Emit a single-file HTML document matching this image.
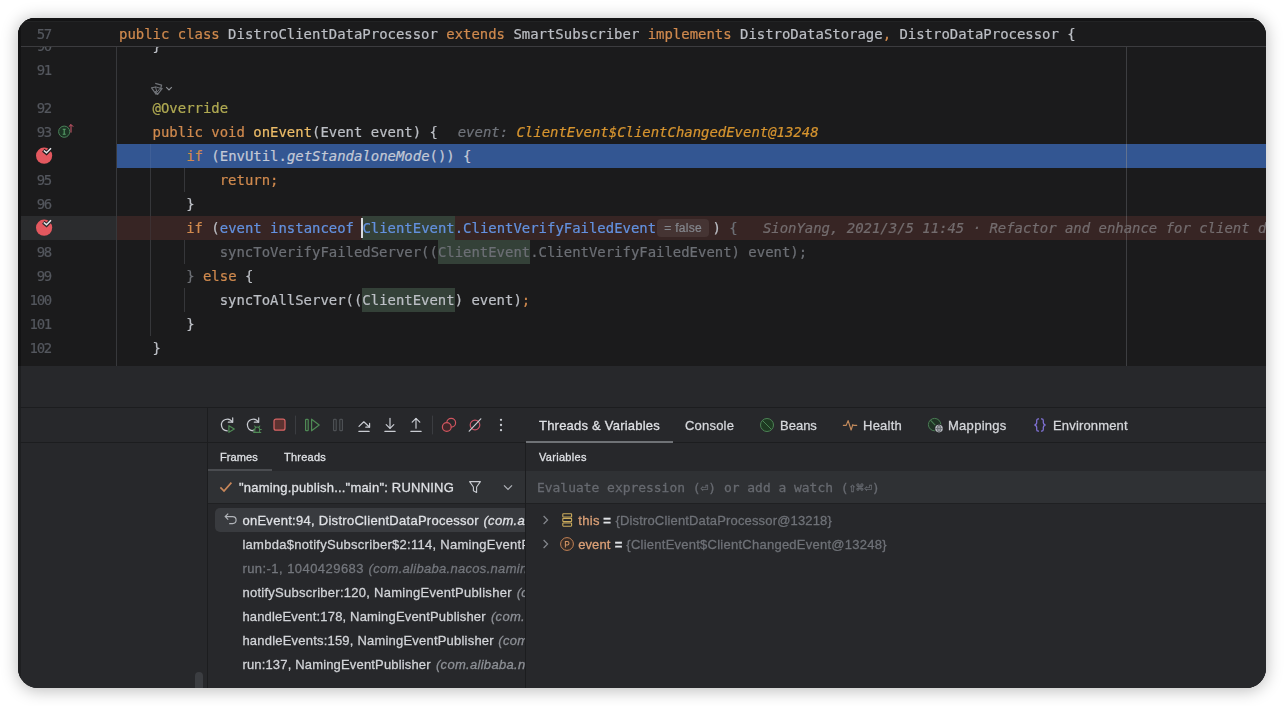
<!DOCTYPE html>
<html lang="en">
<head>
<meta charset="utf-8">
<title>Debugger</title>
<style>
html,body{margin:0;padding:0;}
body{width:1284px;height:706px;background:#fff;overflow:hidden;position:relative;
  font-family:"Liberation Sans","DejaVu Sans",sans-serif;}
#win{position:absolute;left:18px;top:18px;width:1248px;height:670px;border-radius:17px 17px 20px 20px;
  background:#1b1b1c;overflow:hidden;opacity:.999;}
#shadow{position:absolute;left:18px;top:18px;width:1248px;height:670px;border-radius:17px 17px 20px 20px;
  box-shadow:0 1.5px 16px 1px rgba(0,0,0,.25);}
.abs{position:absolute;}
/* ---------- editor ---------- */
#editor{position:absolute;left:0;top:0;width:1248px;height:348px;background:#1b1b1c;
  font-family:"DejaVu Sans Mono","Liberation Mono",monospace;font-size:13.95px;color:#bcbfc5;-webkit-text-stroke:.22px;}
.row{position:absolute;left:0;width:1248px;height:24px;line-height:25px;white-space:pre;}
.ln{position:absolute;left:0;width:32.9px;text-align:right;color:#54575e;font-size:13.95px;letter-spacing:-1.3px;}
.code{position:absolute;left:101px;top:0;white-space:pre;}
.k{color:#d08a4e;}
.an{color:#b0aa52;}
.fn{color:#ecbc68;}
.it{font-style:italic;}
.dim{color:#6c6f75;}
.bl{color:#6391df;}
.hl{background:#344138;display:inline-block;height:24px;vertical-align:top;}
.hint{color:#6f737a;font-style:italic;}
.val{color:#d6942f;font-style:italic;}
.inl{display:inline-block;vertical-align:top;box-sizing:border-box;height:18px;margin-top:3px;line-height:19.500px;width:52px;text-align:center;font-family:"Liberation Sans",sans-serif;font-size:12px;color:#84878d;background:rgba(255,255,255,.07);border-radius:4px;margin-left:1px;margin-right:-5px;letter-spacing:.25px;}
/* ---------- panel ---------- */
#panel{position:absolute;left:0;top:348px;width:1248px;height:322px;background:#27282b;
  font-size:13px;color:#d5d7db;-webkit-text-stroke:.28px;}
.hline{position:absolute;left:0;width:1248px;height:1px;background:#1c1d1f;}
.vline{position:absolute;width:1px;background:#1c1d1f;}
.t{position:absolute;white-space:nowrap;line-height:16px;margin-top:1px;}
.fr{position:absolute;left:224.4px;white-space:nowrap;line-height:26px;height:24px;color:#d2d4d8;}
.fr i{color:#8d9096;}
</style>
</head>
<body>
<div id="shadow"></div>
<div id="win">
<div id="editor">
<!-- right margin guide -->
<div class="abs" style="left:1108px;top:28px;width:1px;height:320px;background:#3d3e41;"></div>
<!-- gutter separator -->
<div class="abs" style="left:98px;top:28px;width:1px;height:320px;background:#37383b;"></div>
<!-- indent guides -->
<div class="abs" style="left:132px;top:126px;width:1px;height:192px;background:#36373a;"></div>
<div class="abs" style="left:166px;top:150px;width:1px;height:24px;background:#36373a;"></div>
<div class="abs" style="left:166px;top:222px;width:1px;height:24px;background:#36373a;"></div>
<div class="abs" style="left:166px;top:270px;width:1px;height:24px;background:#36373a;"></div>

<!-- partially hidden line 90 -->
<div class="row" style="top:16px;"><span class="ln">90</span><span class="code">    }</span></div>
<div class="row" style="top:40px;"><span class="ln">91</span></div>
<!-- inlay row -->
<svg class="abs" style="left:132px;top:63px;" width="26" height="16" viewBox="0 0 26 16">
  <g fill="none" stroke="#707378" stroke-width="1.250" stroke-linejoin="round">
    <path d="M5.200 2.400l6.400 1.800-1.200 4.200M12.400 7.200l-4.800 6.200-2.400-3.200M6.400 13.600L1.600 6.800l4-.8"/>
    <path d="M5.400 5.800l4.800 1.400-3.200 4z" stroke-width="1"/>
  </g>
  <path d="M16.200 6.200l2.800 2.800 2.800-2.800" fill="none" stroke="#8a8d92" stroke-width="1.200"/>
</svg>
<div class="row" style="top:78px;"><span class="ln">92</span><span class="code">    <span class="an">@Override</span></span></div>
<div class="row" style="top:102px;"><span class="ln">93</span><span class="code">    <span class="k">public void</span> <span class="fn">onEvent</span>(Event event) {  <span class="hint" style="margin-left:3px">event: </span><span class="val">ClientEvent$ClientChangedEvent@13248</span></span></div>
<!-- gutter icon line 93 -->
<svg class="abs" style="left:38px;top:104px;" width="20" height="18" viewBox="0 0 20 18">
  <circle cx="8.200" cy="9.700" r="5.600" fill="#1c3324" stroke="#4a8259" stroke-width="1"/>
  <path d="M6.700 7.200h3M6.700 12.200h3M8.200 7.200v5" stroke="#57a068" stroke-width="1.100" fill="none"/>
  <path d="M15 10.600V2.600M12.800 4.700L15 2.500l2.200 2.200" stroke="#d25a6c" stroke-width="1" fill="none"/>
</svg>
<!-- line 94 execution point -->
<div class="row" style="top:126px;"><div class="abs" style="left:99px;top:0;width:1149px;height:24px;background:#335692;"></div>
<div class="abs" style="left:132px;top:0;width:1px;height:24px;background:#3f5f97;"></div>
<div class="abs" style="left:1108px;top:0;width:1px;height:24px;background:#62728f;"></div>
<span class="code">        <span class="k">if</span> <span style="color:#c3c9d6">(EnvUtil.<span class="it">getStandaloneMode</span>()) {</span></span></div>
<div class="row" style="top:150px;"><span class="ln">95</span><span class="code">            <span class="k">return;</span></span></div>
<div class="row" style="top:174px;"><span class="ln">96</span><span class="code">        }</span></div>
<!-- line 97 breakpoint + caret row -->
<div class="row" style="top:198px;"><div class="abs" style="left:3px;top:0;width:95px;height:24px;background:#2b2c2e;"></div>
<div class="abs" style="left:99px;top:0;width:1149px;height:24px;background:#372524;"></div>
<div class="abs" style="left:132px;top:0;width:1px;height:24px;background:#3c3032;"></div>
<div class="abs" style="left:1108px;top:0;width:1px;height:24px;background:#564c4d;"></div>
<span class="code">        <span class="k">if</span> (<span class="bl">event instanceof <span class="hl">ClientEvent</span>.ClientVerifyFailedEvent</span><span class="inl">= false</span> ) <span class="dim">{</span>  <span class="hint" style="color:#736c6e"> SionYang, 2021/3/5 11:45 · Refactor and enhance for client data</span></span>
<div class="abs" style="left:343px;top:2px;width:2px;height:20px;background:#d8dadf;"></div></div>
<div class="row" style="top:222px;"><span class="ln">98</span><span class="code dim">            syncToVerifyFailedServer((<span class="hl">ClientEvent</span>.ClientVerifyFailedEvent) event);</span></div>
<div class="row" style="top:246px;"><span class="ln">99</span><span class="code">        <span class="dim">}</span> <span class="k">else</span> {</span></div>
<div class="row" style="top:270px;"><span class="ln">100</span><span class="code">            syncToAllServer((<span class="hl">ClientEvent</span>) event)<span class="k">;</span></span></div>
<div class="row" style="top:294px;"><span class="ln">101</span><span class="code">        }</span></div>
<div class="row" style="top:318px;"><span class="ln">102</span><span class="code">    }</span></div>

<!-- breakpoints -->
<svg class="abs" style="left:16px;top:128px;" width="20" height="20" viewBox="0 0 20 20">
  <circle cx="10.100" cy="9.700" r="8.100" fill="#e3585f"/>
  <path d="M9.300 4.300l3.200 2.700 4.900-5" stroke="#1b1b1c" stroke-width="3.800" fill="none"/>
  <path d="M9.800 4.500l2.700 2.300 4.500-4.500" stroke="#e8e9ec" stroke-width="1.500" fill="none"/>
</svg>
<svg class="abs" style="left:16px;top:200px;" width="20" height="20" viewBox="0 0 20 20">
  <circle cx="10.100" cy="9.700" r="8.100" fill="#e3585f"/>
  <path d="M9.300 4.300l3.200 2.700 4.900-5" stroke="#2b2c2e" stroke-width="3.800" fill="none"/>
  <path d="M9.800 4.500l2.700 2.300 4.500-4.500" stroke="#e8e9ec" stroke-width="1.500" fill="none"/>
</svg>

<!-- sticky header -->
<div class="abs" style="left:0;top:0;width:1248px;height:28px;background:#1b1b1c;"></div>
<div class="abs" style="left:0;top:28px;width:1248px;height:1px;background:#3c3c3f;"></div>
<div class="abs" style="left:0;top:0;width:1248px;height:3px;background:#141415;"></div>
<div class="abs" style="left:0;top:3px;width:1248px;height:1px;background:#222324;"></div>
<div class="abs" style="left:0;top:0;width:2.5px;height:348px;background:#131314;"></div>
<div class="row" style="top:4px;"><span class="ln">57</span><span class="code"><span class="k">public class</span> DistroClientDataProcessor <span class="k">extends</span> SmartSubscriber <span class="k">implements</span> DistroDataStorage<span class="k">,</span> DistroDataProcessor {</span></div>
</div>
<div id="panel">
<div class="abs" style="left:0;top:0;width:2.5px;height:322px;background:#1e1f21;"></div>
<div class="hline" style="top:41px;"></div>
<div class="hline" style="top:76px;"></div>
<div class="vline" style="left:188.500px;top:41px;height:281px;"></div>
<div class="vline" style="left:507px;top:77px;height:245px;"></div>

<!-- toolbar icons -->
<svg class="abs" style="left:196px;top:47.4px;" width="300" height="24" viewBox="0 0 300 24" fill="none" stroke-width="1.2" stroke-linecap="round" stroke-linejoin="round">
  <!-- rerun: centre 14 -->
  <g stroke="#c9ccd2"><path d="M18.400 9.300A5.800 5.800 0 1 0 13.300 17.800"/><path d="M18.700 4.800v4.400h-4.400"/></g>
  <path d="M14.900 12.700v6.600l5.400-3.300z" stroke="#4f8a55"/>
  <!-- rerun debug: centre 40 -->
  <g stroke="#c9ccd2"><path d="M44.400 9.300A5.800 5.800 0 1 0 39.300 17.800"/><path d="M44.700 4.800v4.400h-4.400"/></g>
  <g stroke="#4f8a55" stroke-width="1.050"><path d="M40.800 19.300v-2.600a2.400 2.800 0 0 1 4.800 0v2.600z"/><path d="M41.600 14.200l-1-1.200M44.800 14.200l1-1.200M40.600 16.400h-1.500M45.800 16.400h1.500M39.600 19.400h7.200"/></g>
  <!-- stop: centre 66 -->
  <rect x="60" y="6.200" width="11" height="11" rx="2" fill="#5c3230" stroke="#d96464"/>
  <!-- sep -->
  <path d="M81.5 3v18" stroke="#3b3d41" stroke-width="1"/>
  <!-- resume: centre 98 -->
  <g stroke="#4f8a55"><rect x="91.6" y="6.4" width="2.6" height="11.2" rx=".6"/><path d="M97.6 6.2v11.6l7.6-5.8z"/></g>
  <!-- pause: centre 124 -->
  <g stroke="#4d5054"><rect x="119.6" y="6.4" width="2.6" height="11.2" rx=".6"/><rect x="125.8" y="6.4" width="2.6" height="11.2" rx=".6"/></g>
  <!-- step over: centre 150 -->
  <g stroke="#c9ccd2"><path d="M144.900 18.400h10.200"/><path d="M145 13.400l4.800-4.600 5.600 5.200"/><path d="M151.800 14.200h3.800v-3.800"/></g>
  <!-- step into: centre 176 -->
  <g stroke="#c9ccd2"><path d="M170.900 18.400h10.200"/><path d="M176 5.4v9.8"/><path d="M172.2 11.6l3.8 3.8 3.8-3.8"/></g>
  <!-- step out: centre 202 -->
  <g stroke="#c9ccd2"><path d="M196.900 18.400h10.200"/><path d="M202 15.2V5.6"/><path d="M198.2 9.2l3.800-3.8 3.800 3.800"/></g>
  <!-- sep -->
  <path d="M218.5 3v18" stroke="#3b3d41" stroke-width="1"/>
  <!-- view breakpoints: centre 235 -->
  <g stroke="#d0555f"><circle cx="237.200" cy="9.800" r="4.400"/><circle cx="232.800" cy="14" r="4.400" fill="#3f2629"/></g>
  <!-- mute: centre 261 -->
  <circle cx="261" cy="12" r="4.800" stroke="#cc5264"/><path d="M255.200 18.200L266.800 5.800" stroke="#c9ccd2"/>
  <!-- more -->
  <g fill="#c9ccd2" stroke="none"><circle cx="287" cy="6.800" r="1.150"/><circle cx="287" cy="12" r="1.150"/><circle cx="287" cy="17.200" r="1.150"/></g>
</svg>

<!-- main tabs -->
<div class="t" style="left:521px;top:51px;letter-spacing:.22px;color:#dfe1e5;">Threads &amp; Variables</div>
<div class="abs" style="left:508px;top:75px;width:147px;height:2px;background:#6f7276;"></div>
<div class="t" style="left:667px;top:51px;letter-spacing:.2px;">Console</div>
<svg class="abs" style="left:741px;top:51px;" width="16" height="16" viewBox="0 0 16 16" fill="none"><circle cx="8" cy="8" r="6.500" fill="#1e3a22" stroke="#4c8355" stroke-width="1"/><path d="M3.400 3.400l9.200 9.200" stroke="#4c8355" stroke-width="1"/></svg>
<div class="t" style="left:762px;top:51px;">Beans</div>
<svg class="abs" style="left:824px;top:51px;" width="16" height="16" viewBox="0 0 16 16" fill="none"><path d="M1.400 8.400h2.800l1.900-4.800 3 9.400 1.700-5.400.9.800h3" stroke="#c28a5c" stroke-width="1.200" stroke-linejoin="round" stroke-linecap="round"/></svg>
<div class="t" style="left:845px;top:51px;letter-spacing:.25px;">Health</div>
<svg class="abs" style="left:909px;top:51px;" width="17" height="17" viewBox="0 0 17 17" fill="none"><circle cx="7.600" cy="7.600" r="6.200" fill="#1f3324" stroke="#4a7d54" stroke-width="1"/><path d="M3.400 3.200l5 5.200" stroke="#4a7d54" stroke-width="1.100"/><circle cx="12" cy="11.600" r="4.600" fill="#27282b"/><circle cx="12" cy="11.600" r="3.800" fill="#b9bcc1"/><path d="M8.400 11.600h7.200M12 8v7.200" stroke="#55585d" stroke-width=".7"/><ellipse cx="12" cy="11.600" rx="1.700" ry="3.600" stroke="#55585d" stroke-width=".7"/></svg>
<div class="t" style="left:930px;top:51px;letter-spacing:.28px;">Mappings</div>
<svg class="abs" style="left:1014px;top:51px;" width="16" height="16" viewBox="0 0 16 16" fill="none"><path d="M7 1.800H6.400c-1 0-1.700.7-1.700 1.700v2.300c0 1-.6 1.700-1.700 1.900v.6c1.100.2 1.700.9 1.700 1.900v2.300c0 1 .7 1.700 1.700 1.700H7M9 1.800h.6c1 0 1.700.7 1.700 1.700v2.300c0 1 .6 1.700 1.700 1.900v.6c-1.100.2-1.700.9-1.700 1.900v2.300c0 1-.7 1.700-1.700 1.700H9" stroke="#8072d6" stroke-width="1.250" stroke-linejoin="round"/></svg>
<div class="t" style="left:1035px;top:51px;letter-spacing:.16px;">Environment</div>

<!-- sub tabs -->
<div class="t" style="left:202px;top:83px;font-size:11px;margin-top:0;letter-spacing:.08px;color:#dfe1e5;">Frames</div>
<div class="abs" style="left:189.500px;top:103px;width:64.500px;height:2px;background:#4a4c50;"></div>
<div class="t" style="left:266px;top:83px;font-size:11px;margin-top:0;letter-spacing:.24px;color:#dfe1e5;">Threads</div>
<div class="t" style="left:521px;top:83px;font-size:11px;margin-top:0;letter-spacing:.3px;color:#dfe1e5;">Variables</div>

<!-- thread selector row -->
<div class="abs" style="left:189.500px;top:105px;width:317.500px;height:32px;background:#2f3134;"></div>
<div class="abs" style="left:189.500px;top:137px;width:317.500px;height:1px;background:#1f2022;"></div>
<svg class="abs" style="left:200px;top:113px;" width="16" height="16" viewBox="0 0 16 16" fill="none"><path d="M2.400 8.400l3.600 3.600 7.400-8.400" stroke="#c8875a" stroke-width="1.650"/></svg>
<div class="t" style="left:221px;top:113px;letter-spacing:.205px;color:#dfe1e5;">"naming.publish..."main": RUNNING</div>
<svg class="abs" style="left:449px;top:113px;" width="16" height="16" viewBox="0 0 16 16" fill="none"><path d="M2.600 2.600h10.800L9.600 8v5.400l-3.200-1.600V8z" stroke="#c9ccd2" stroke-width="1.100" stroke-linejoin="round"/></svg>
<svg class="abs" style="left:482px;top:113px;" width="16" height="16" viewBox="0 0 16 16" fill="none"><path d="M4 6.400l4 4 4-4" stroke="#b0b3b9" stroke-width="1.200"/></svg>

<!-- evaluate row -->
<div class="abs" style="left:508px;top:105px;width:740px;height:32px;background:#2f3134;"></div>
<div class="abs" style="left:508px;top:137px;width:740px;height:1px;background:#1f2022;"></div>
<div class="t" style="left:519px;top:113px;font-family:'DejaVu Sans Mono','Liberation Mono',monospace;font-size:12.950px;margin-top:.8px;color:#676a70;">Evaluate expression (⏎) or add a watch (⇧⌘⏎)</div>

<!-- frames list -->
<div class="abs" style="left:197px;top:142px;width:330px;height:24px;border-radius:5px;background:#393b3f;"></div>
<svg class="abs" style="left:205.300px;top:145.200px;" width="16" height="16" viewBox="0 0 16 16" fill="none"><path d="M5.200 2.600L2.200 5.600l3 3M2.400 5.600h7.200a3.500 3.500 0 0 1 0 7H6.200" stroke="#b2b5ba" stroke-width="1.150"/></svg>
<div class="fr" style="top:142px;color:#dfe1e5;"><span style="letter-spacing:0.281px">onEvent:94, DistroClientDataProcessor</span><i style="margin-left:4.5px;letter-spacing:.3px;color:#dfe1e5">(com.alibaba.nacos.naming</i></div>
<div class="fr" style="top:166px;color:#d2d4d8;"><span style="letter-spacing:0.285px">lambda$notifySubscriber$2:114, NamingEventPublisher</span><i style="margin-left:4.7px;letter-spacing:.3px;color:#8d9096">(com.alibaba</i></div>
<div class="fr" style="top:190px;color:#74777d;"><span style="letter-spacing:0.448px">run:-1, 1040429683</span><i style="margin-left:4.6px;letter-spacing:.3px;color:#74777d">(com.alibaba.nacos.naming.core.v2.event</i></div>
<div class="fr" style="top:214px;color:#d2d4d8;"><span style="letter-spacing:0.271px">notifySubscriber:120, NamingEventPublisher</span><i style="margin-left:4.9px;letter-spacing:.3px;color:#8d9096">(com.alibaba.nacos</i></div>
<div class="fr" style="top:238px;color:#d2d4d8;"><span style="letter-spacing:0.171px">handleEvent:178, NamingEventPublisher</span><i style="margin-left:5.2px;letter-spacing:.3px;color:#8d9096">(com.alibaba.nacos.naming</i></div>
<div class="fr" style="top:262px;color:#d2d4d8;"><span style="letter-spacing:0.207px">handleEvents:159, NamingEventPublisher</span><i style="margin-left:4.5px;letter-spacing:.3px;color:#8d9096">(com.alibaba.nacos.naming</i></div>
<div class="fr" style="top:286px;color:#d2d4d8;"><span style="letter-spacing:0.166px">run:137, NamingEventPublisher</span><i style="margin-left:5.2px;letter-spacing:.3px;color:#8d9096">(com.alibaba.nacos.naming.core.v2</i></div>
<!-- cover overflow of frames into variables -->
<div class="abs" style="left:507px;top:138px;width:741px;height:184px;background:#27282b;"></div>
<div class="vline" style="left:507px;top:77px;height:245px;"></div>

<!-- variables -->
<svg class="abs" style="left:519.800px;top:146px;" width="16" height="16" viewBox="0 0 16 16" fill="none"><path d="M5.600 4l4 4-4 4" stroke="#85888e" stroke-width="1.200"/></svg>
<svg class="abs" style="left:541px;top:146px;" width="16" height="16" viewBox="0 0 16 16" fill="none" stroke="#cbab5c" stroke-width="1.100"><rect x="3.800" y="1.800" width="8.800" height="3.200" rx=".6"/><rect x="3.800" y="6.400" width="8.800" height="3.200" rx=".6"/><rect x="3.800" y="11" width="8.800" height="3.200" rx=".6"/></svg>
<div class="t" style="left:560.3px;top:146px;color:#dba077;letter-spacing:.3px">this</div>
<div class="t" style="left:585.2px;top:146px;color:#dfe1e5;font-weight:bold">=</div>
<div class="t" style="left:597.4px;top:146px;color:#6f7278;letter-spacing:.164px">{DistroClientDataProcessor@13218}</div>
<svg class="abs" style="left:519.800px;top:170px;" width="16" height="16" viewBox="0 0 16 16" fill="none"><path d="M5.600 4l4 4-4 4" stroke="#85888e" stroke-width="1.200"/></svg>
<svg class="abs" style="left:541px;top:170px;" width="16" height="16" viewBox="0 0 16 16" fill="none"><circle cx="8" cy="8" r="6.400" fill="#362b25" stroke="#c48356" stroke-width="1"/><path d="M6.400 11.400V5.400h1.800a1.800 1.800 0 0 1 0 3.600h-1.800" stroke="#d19363" stroke-width="1.050"/></svg>
<div class="t" style="left:560.3px;top:170px;color:#dba077;letter-spacing:.04px">event</div>
<div class="t" style="left:596.7px;top:170px;color:#dfe1e5;font-weight:bold">=</div>
<div class="t" style="left:608.3px;top:170px;color:#6f7278;letter-spacing:.25px">{ClientEvent$ClientChangedEvent@13248}</div>

<!-- scroll thumb -->
<div class="abs" style="left:177px;top:306px;width:8px;height:30px;border-radius:4px;background:#3b3d41;"></div>
</div>
</div>
</body>
</html>
